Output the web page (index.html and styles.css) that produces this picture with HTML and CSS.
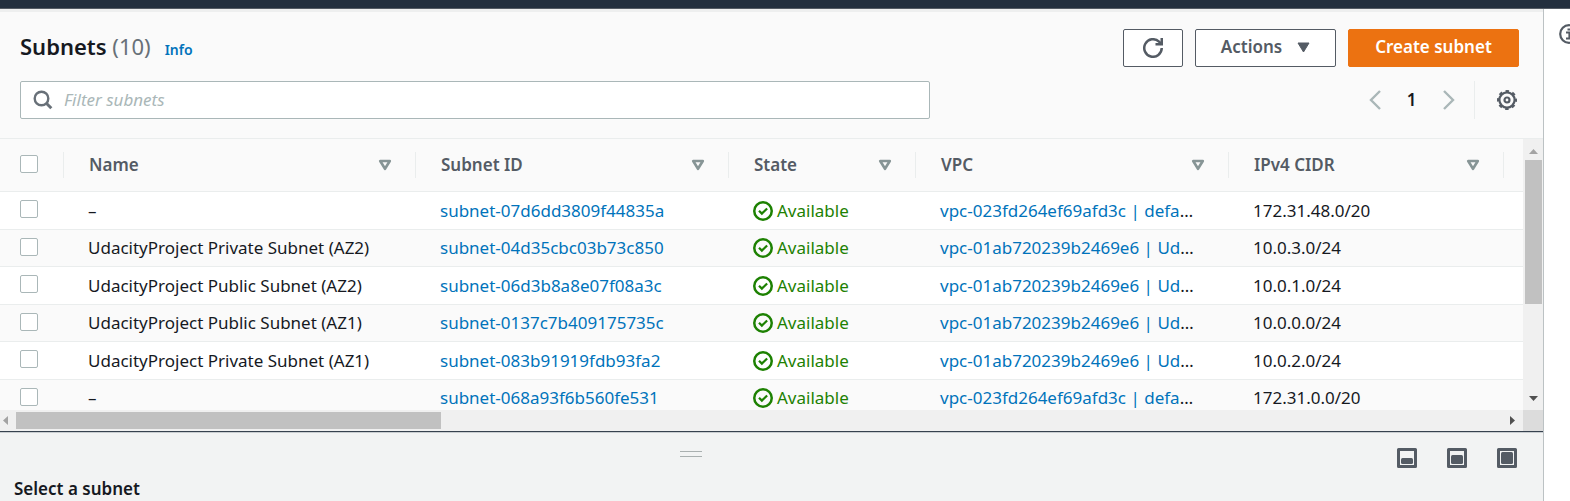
FILE: index.html
```html
<!DOCTYPE html>
<html lang="en">
<head>
<meta charset="utf-8">
<title>Subnets</title>
<link rel="stylesheet" href="styles.css">
</head>
<body>
<svg class="sprite" aria-hidden="true">
  <symbol id="check" viewBox="0 0 16 16"><circle cx="8" cy="8" r="7" fill="none" stroke="currentColor" stroke-width="2"/><path d="M4.800 7.800l2.300 2.300L11.300 6" fill="none" stroke="currentColor" stroke-width="1.800"/></symbol>
  <symbol id="sort" viewBox="0 0 14 12"><path d="M2.200 2h9.600L7 9.800z" fill="none" stroke="currentColor" stroke-width="2.600" stroke-linejoin="round"/></symbol>
</svg>
<header class="topbar"></header>
<div class="layout">
  <main class="main">
    <section class="toolbar">
      <div class="title-row">
        <h1 class="title">Subnets <span class="count">(10)</span></h1>
        <a class="info" href="#">Info</a>
        <div class="actions">
          <button class="btn btn-icon" type="button" aria-label="Refresh"><svg width="20" height="20" viewBox="0 0 16 16" fill="none" stroke="currentColor" stroke-width="2"><path d="M15 8a7 7 0 1 1-2.200-5.100L15 5.100"/><path d="M10 5h5V0"/></svg></button>
          <button class="btn btn-menu" type="button">Actions <svg width="13" height="11" viewBox="0 0 13 11"><path d="M1 1h11L6.500 10z" fill="currentColor" stroke="currentColor" stroke-linejoin="round"/></svg></button>
          <button class="btn btn-primary" type="button">Create subnet</button>
        </div>
      </div>
      <div class="filter-row">
        <label class="search">
          <svg width="20" height="20" viewBox="0 0 20 20" fill="none" stroke="currentColor"><circle cx="8.500" cy="8.500" r="6.800" stroke-width="2.400"/><path d="M13.300 13.300l5 5" stroke-width="3"/></svg>
          <input type="text" placeholder="Filter subnets" aria-label="Filter subnets">
        </label>
        <nav class="pager" aria-label="Pagination">
          <button class="page" type="button" aria-label="Previous page"><svg width="12" height="20" viewBox="0 0 12 20" fill="none" stroke="currentColor" stroke-width="2.400"><path d="M11 1L2 10l9 9"/></svg></button>
          <button class="page current" type="button">1</button>
          <button class="page" type="button" aria-label="Next page"><svg width="12" height="20" viewBox="0 0 12 20" fill="none" stroke="currentColor" stroke-width="2.400"><path d="M1 1l9 9-9 9"/></svg></button>
        </nav>
        <button class="settings" type="button" aria-label="Preferences"><svg width="20" height="20" viewBox="0 0 20 20" fill="none" stroke="currentColor"><circle cx="10" cy="10" r="7.600" stroke-width="2.200"/><circle cx="10" cy="10" r="9" stroke-width="2" stroke-dasharray="3.534 3.534" stroke-dashoffset="1.767"/><circle cx="10" cy="10" r="2.500" stroke-width="2.200"/></svg></button>
      </div>
    </section>

    <section class="grid">
      <div class="viewport">
        <table class="table">
          <colgroup><col class="c-check"><col class="c-name"><col class="c-id"><col class="c-state"><col class="c-vpc"><col class="c-cidr"><col></colgroup>
          <thead>
            <tr>
              <th><input type="checkbox" aria-label="Select all"></th>
              <th><div class="head">Name <svg width="14" height="12"><use href="#sort"/></svg></div></th>
              <th><div class="head">Subnet ID <svg width="14" height="12"><use href="#sort"/></svg></div></th>
              <th><div class="head">State <svg width="14" height="12"><use href="#sort"/></svg></div></th>
              <th><div class="head">VPC <svg width="14" height="12"><use href="#sort"/></svg></div></th>
              <th><div class="head">IPv4 CIDR <svg width="14" height="12"><use href="#sort"/></svg></div></th>
              <th></th>
            </tr>
          </thead>
          <tbody>
            <tr><td><input type="checkbox" aria-label="Select row 1"></td><td>–</td><td><a href="#">subnet-07d6dd3809f44835a</a></td><td><span class="state"><svg width="20" height="20"><use href="#check"/></svg>Available</span></td><td><a href="#">vpc-023fd264ef69afd3c | defa</a>…</td><td>172.31.48.0/20</td><td></td></tr>
            <tr><td><input type="checkbox" aria-label="Select row 2"></td><td>UdacityProject Private Subnet (AZ2)</td><td><a href="#">subnet-04d35cbc03b73c850</a></td><td><span class="state"><svg width="20" height="20"><use href="#check"/></svg>Available</span></td><td><a href="#">vpc-01ab720239b2469e6 | Ud</a>…</td><td>10.0.3.0/24</td><td></td></tr>
            <tr><td><input type="checkbox" aria-label="Select row 3"></td><td>UdacityProject Public Subnet (AZ2)</td><td><a href="#">subnet-06d3b8a8e07f08a3c</a></td><td><span class="state"><svg width="20" height="20"><use href="#check"/></svg>Available</span></td><td><a href="#">vpc-01ab720239b2469e6 | Ud</a>…</td><td>10.0.1.0/24</td><td></td></tr>
            <tr><td><input type="checkbox" aria-label="Select row 4"></td><td>UdacityProject Public Subnet (AZ1)</td><td><a href="#">subnet-0137c7b409175735c</a></td><td><span class="state"><svg width="20" height="20"><use href="#check"/></svg>Available</span></td><td><a href="#">vpc-01ab720239b2469e6 | Ud</a>…</td><td>10.0.0.0/24</td><td></td></tr>
            <tr><td><input type="checkbox" aria-label="Select row 5"></td><td>UdacityProject Private Subnet (AZ1)</td><td><a href="#">subnet-083b91919fdb93fa2</a></td><td><span class="state"><svg width="20" height="20"><use href="#check"/></svg>Available</span></td><td><a href="#">vpc-01ab720239b2469e6 | Ud</a>…</td><td>10.0.2.0/24</td><td></td></tr>
            <tr><td><input type="checkbox" aria-label="Select row 6"></td><td>–</td><td><a href="#">subnet-068a93f6b560fe531</a></td><td><span class="state"><svg width="20" height="20"><use href="#check"/></svg>Available</span></td><td><a href="#">vpc-023fd264ef69afd3c | defa</a>…</td><td>172.31.0.0/20</td><td></td></tr>
          </tbody>
        </table>
      </div>
      <div class="vbar" aria-hidden="true">
        <svg width="9" height="5" viewBox="0 0 9 5"><path d="M0 5L4.500 0 9 5z" fill="#a3a3a3"/></svg>
        <div class="vtrack"><div class="vthumb"></div></div>
        <svg width="9" height="5" viewBox="0 0 9 5"><path d="M0 0L4.500 5 9 0z" fill="#505050"/></svg>
      </div>
      <div class="hbar" aria-hidden="true">
        <svg width="5" height="9" viewBox="0 0 5 9"><path d="M5 0L0 4.500 5 9z" fill="#a3a3a3"/></svg>
        <div class="htrack"><div class="hthumb"></div></div>
        <svg width="5" height="9" viewBox="0 0 5 9"><path d="M0 0L5 4.500 0 9z" fill="#505050"/></svg>
      </div>
      <div class="corner"></div>
    </section>

    <section class="details">
      <div class="details-bar">
        <div class="handle"></div>
        <div class="sizes">
          <button type="button" aria-label="Small panel"><svg width="20" height="20" viewBox="0 0 20 20"><rect x="1.500" y="1.500" width="17" height="17" fill="none" stroke="currentColor" stroke-width="3" stroke-linejoin="round"/><rect x="4" y="10" width="12" height="6" rx="1.500" fill="currentColor"/></svg></button>
          <button type="button" aria-label="Medium panel"><svg width="20" height="20" viewBox="0 0 20 20"><rect x="1.500" y="1.500" width="17" height="17" fill="none" stroke="currentColor" stroke-width="3" stroke-linejoin="round"/><rect x="4" y="7" width="12" height="9" rx="1.500" fill="currentColor"/></svg></button>
          <button type="button" aria-label="Full panel"><svg width="20" height="20" viewBox="0 0 20 20"><rect x="1.500" y="1.500" width="17" height="17" fill="none" stroke="currentColor" stroke-width="3" stroke-linejoin="round"/><rect x="4" y="4" width="12" height="12" rx="1.500" fill="currentColor"/></svg></button>
        </div>
      </div>
      <h2 class="details-title">Select a subnet</h2>
    </section>
  </main>
  <aside class="help">
    <button type="button" aria-label="Help"><svg width="20" height="20" viewBox="0 0 20 20" fill="none" stroke="currentColor"><circle cx="10" cy="10" r="8.800" stroke-width="2.200"/><path d="M7 8.500h3.500V14M7 14.500h7M8.500 5.500H11" stroke-width="2.200"/></svg></button>
  </aside>
</div>
</body>
</html>
```
FILE: styles.css
```css
* { box-sizing: border-box; }
body {
  margin: 0;
  height: 100vh;
  display: flex;
  flex-direction: column;
  overflow: hidden;
  background: #fff;
  color: #16191f;
  font: 17px/24px "Noto Sans", "Open Sans", sans-serif;
}
button { font: inherit; color: inherit; cursor: pointer; }
svg { display: block; flex: none; }
a { color: #0073bb; text-decoration: none; }
.sprite { position: absolute; width: 0; height: 0; }
.topbar { flex: none; height: 9px; background: #232f3e; border-bottom: 1px solid #545b64; }
.layout { flex: 1; min-height: 0; display: flex; }
.main {
  flex: 1;
  min-width: 0;
  display: flex;
  flex-direction: column;
  border-right: 1px solid #bcc2c4;
}

.toolbar {
  flex: none;
  padding: 17px 24px 19px 20px;
  background: #fafafa;
  border-top: 3px solid #eeefef;
  border-bottom: 1px solid #eaeded;
}
.title-row { display: flex; align-items: center; margin-bottom: 14px; }
.title { margin: 0; padding-bottom: 4px; font-size: 22px; line-height: 34px; font-weight: 600; }
.count { color: #687078; font-weight: 400; }
.info { margin-left: 14px; padding-top: 4px; font-size: 14px; font-weight: 600; }
.actions { margin-left: auto; display: flex; gap: 12px; }
.btn {
  height: 38px;
  display: flex;
  align-items: center;
  justify-content: center;
  border: 1px solid #545b64;
  border-radius: 2px;
  background: #fff;
  color: #545b64;
  font-weight: 600;
  padding: 0 0 2px;
}
.btn-icon { width: 60px; padding: 0; }
.btn-menu { width: 141px; gap: 15px; }
.btn-primary { width: 171px; border-color: #ec7211; background: #ec7211; color: #fff; }

.filter-row { display: flex; align-items: center; }
.search {
  width: 60.7%;
  height: 38px;
  display: flex;
  align-items: center;
  gap: 11px;
  padding: 0 12px;
  border: 1px solid #aab7b8;
  border-radius: 2px;
  background: #fff;
  color: #687078;
}
.search input { flex: 1; min-width: 0; border: 0; outline: 0; padding: 0; background: none; font: inherit; }
.search input::placeholder { color: #aab7b8; font-style: italic; opacity: 1; }
.pager { margin-left: auto; display: flex; align-items: center; padding-right: 7px; height: 38px; border-right: 1px solid #eaeded; }
.page { display: flex; justify-content: center; width: 37px; padding: 0; border: 0; background: none; color: #aab7b8; }
.page.current { color: #16191f; font-weight: 600; }
.settings { display: flex; margin-left: 22px; margin-right: 2px; padding: 0; border: 0; background: none; color: #545b64; }

.grid {
  flex: 1;
  min-height: 0;
  display: grid;
  grid-template-columns: minmax(0, 1fr) 20px;
  grid-template-rows: minmax(0, 1fr) 21px;
}
.viewport { overflow: hidden; }
.table { width: 100%; table-layout: fixed; border-collapse: separate; border-spacing: 0; }
.c-check { width: 63px; }
.c-name { width: 352px; }
.c-id { width: 313px; }
.c-state { width: 187px; }
.c-vpc { width: 313px; }
.c-cidr { width: 275px; }
th, td { text-align: left; white-space: nowrap; border-bottom: 1px solid #eaeded; }
th { height: 53px; padding: 0; background: #fafafa; color: #545b64; font-weight: 600; }
.head {
  height: 26px;
  display: flex;
  align-items: center;
  justify-content: space-between;
  padding: 0 23px 0 25px;
  border-left: 1px solid #eaeded;
}
.head svg { color: #879596; }
th:last-child { background: linear-gradient(#eaeded, #eaeded) left center / 1px 26px no-repeat #fafafa; }
td { height: 38px; padding: 0 10px 0 25px; }
tr:nth-child(even) td { height: 37px; background: #fafafa; }
th:first-child, td:first-child { padding: 0 0 0 20px; }
input[type="checkbox"] {
  appearance: none;
  display: block;
  width: 18px;
  height: 18px;
  margin: 0 0 3px;
  border: 1px solid #aab7b8;
  border-radius: 2px;
  background: #fff;
}
.state { display: flex; align-items: center; gap: 4px; color: #1d8102; }

.vbar { display: flex; flex-direction: column; align-items: center; padding: 10px 0 9px; background: #f0f0f0; }
.vtrack { flex: 1; align-self: stretch; padding: 6px 1px 8px 2px; }
.vthumb { height: 63%; background: #c1c1c1; }
.hbar { display: flex; align-items: center; padding: 0 8px 0 3px; background: #f0f0f0; }
.htrack { flex: 1; padding: 0 8px; }
.hthumb { width: 28.6%; height: 17px; background: #c1c1c1; }
.corner { background: #dcdcdc; }

.details {
  flex: none;
  height: 70px;
  background: #f2f3f3;
  border-top: 1px solid #37424f;
  box-shadow: inset 0 1px #c9cdd0;
}
.details-bar { display: flex; align-items: center; gap: 15px; padding: 16px 26px 0 0; }
.handle { width: 22px; height: 6px; margin: 0 auto 9px; border: solid #aab0b0; border-width: 1px 0; }
.sizes { display: flex; gap: 30px; color: #545b64; }
.sizes button { padding: 0; border: 0; background: none; }
.details-title { margin: 8px 0 0 14px; font-size: 17px; line-height: 26px; font-weight: 600; }

.help { flex: none; width: 26px; overflow: hidden; padding: 15px 0 0 15px; color: #545b64; }
.help button { padding: 0; border: 0; background: none; }
```
